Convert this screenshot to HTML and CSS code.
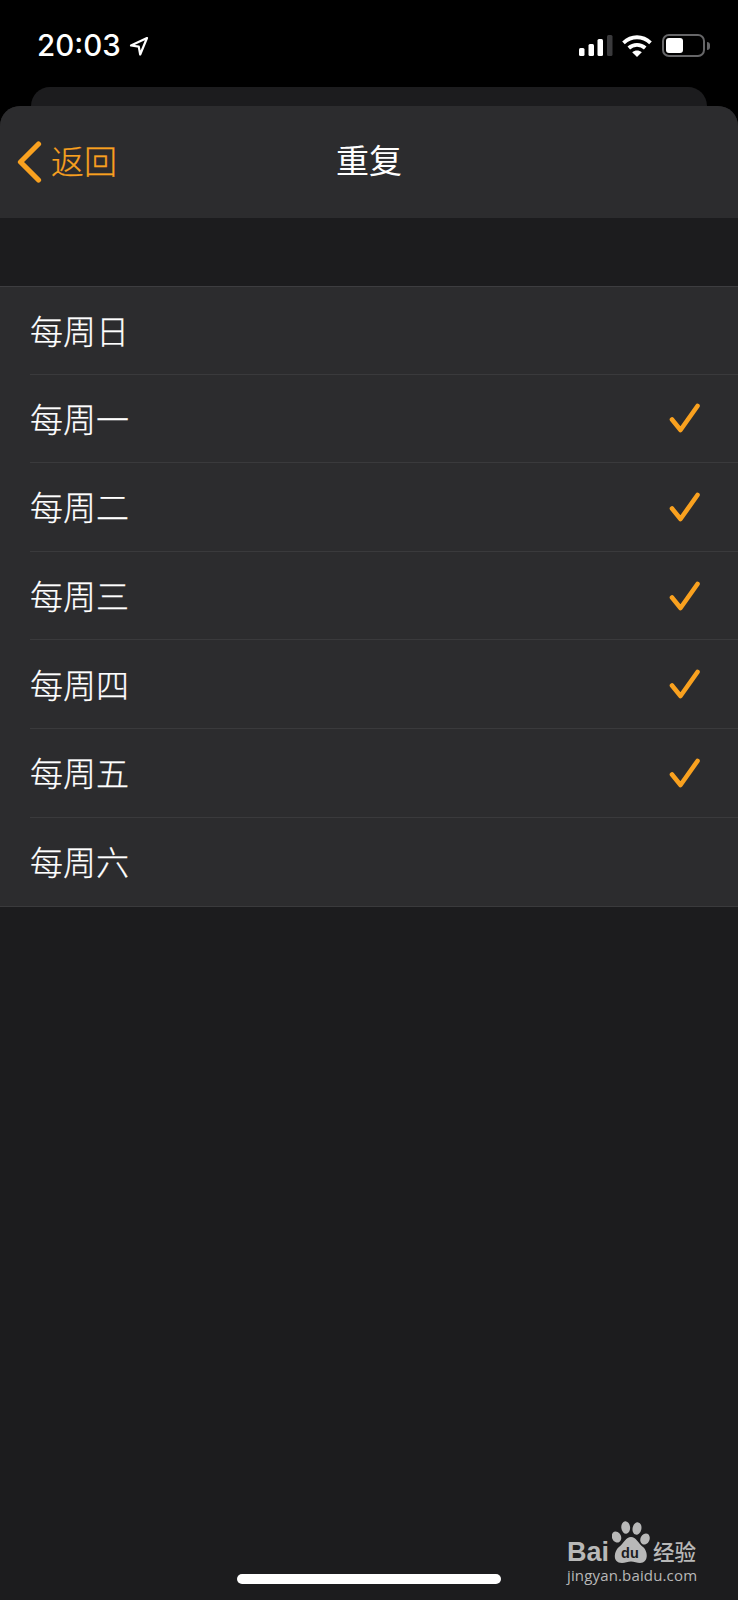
FILE: index.html
```html
<!DOCTYPE html>
<html lang="zh">
<head>
<meta charset="utf-8">
<title>重复</title>
<link rel="stylesheet" href="styles.css">
</head>
<body>
<div class="phone">
  <header class="status">
    <div class="status-left">
      <span class="time">20:03</span>
      <svg class="loc" width="20" height="20" viewBox="0 0 20 20"><path d="M18 2 2 9.500l7.800 1.200 1.400 7.800z" fill="none" stroke="#fff" stroke-width="2.200" stroke-linejoin="round"/></svg>
    </div>
    <div class="status-right">
      <svg class="signal" width="34" height="21" viewBox="0 0 34 21">
        <rect x="0" y="13" width="5.500" height="8" rx="1.500" fill="#fff"/>
        <rect x="9.500" y="9" width="5.500" height="12" rx="1.500" fill="#fff"/>
        <rect x="18.500" y="4" width="5.500" height="17" rx="1.500" fill="#fff"/>
        <rect x="28" y="0" width="5.500" height="21" rx="1.500" fill="#3a3a3c"/>
      </svg>
      <svg class="wifi" width="30" height="22" viewBox="0 0 30 22" fill="none" stroke="#fff" stroke-width="3.800">
        <path d="M1.500 7.800C9.400 .4 20.600 .4 28.500 7.800"/>
        <path d="M6.800 13C11.400 8.800 18.600 8.800 23.200 13"/>
        <path d="M15 22 10.200 17.200C13 14.800 17 14.800 19.800 17.200z" fill="#fff" stroke="none"/>
      </svg>
      <div class="battery">
        <div class="battery-body"><div class="battery-level"></div></div>
        <div class="battery-cap"></div>
      </div>
    </div>
  </header>
  <div class="back-sheet"></div>
  <main class="sheet">
    <nav class="nav">
      <div class="nav-back">
        <svg width="26" height="44" viewBox="0 0 26 44" fill="none" stroke="#f9a11f" stroke-width="5.200" stroke-linecap="round" stroke-linejoin="round"><path d="M21.500 4 3.500 22l18 18"/></svg>
        <span class="nav-back-label">返回</span>
      </div>
      <h1 class="nav-title">重复</h1>
    </nav>
    <div class="spacer"></div>
    <ul class="list">
      <li class="row"><div class="row-inner"><span class="row-label">每周日</span></div></li>
      <li class="row"><div class="row-inner"><span class="row-label">每周一</span><svg class="check" width="32" height="34" viewBox="0 0 32 34"><path d="M3 18.500 11.500 29 28.500 5"/></svg></div></li>
      <li class="row"><div class="row-inner"><span class="row-label">每周二</span><svg class="check" width="32" height="34" viewBox="0 0 32 34"><path d="M3 18.500 11.500 29 28.500 5"/></svg></div></li>
      <li class="row"><div class="row-inner"><span class="row-label">每周三</span><svg class="check" width="32" height="34" viewBox="0 0 32 34"><path d="M3 18.500 11.500 29 28.500 5"/></svg></div></li>
      <li class="row"><div class="row-inner"><span class="row-label">每周四</span><svg class="check" width="32" height="34" viewBox="0 0 32 34"><path d="M3 18.500 11.500 29 28.500 5"/></svg></div></li>
      <li class="row"><div class="row-inner"><span class="row-label">每周五</span><svg class="check" width="32" height="34" viewBox="0 0 32 34"><path d="M3 18.500 11.500 29 28.500 5"/></svg></div></li>
      <li class="row"><div class="row-inner"><span class="row-label">每周六</span></div></li>
    </ul>
    <div class="home-indicator"></div>
  </main>
  <div class="watermark">
    <div class="wm-top">
      <span class="wm-bai">Bai</span>
      <div class="wm-logo">
        <svg width="38" height="42" viewBox="0 0 38 42" fill="#b8b8b8">
          <ellipse cx="4.500" cy="16" rx="4.500" ry="5.800" transform="rotate(-25 4.500 16)"/>
          <ellipse cx="13.700" cy="6.500" rx="4.400" ry="6.200" transform="rotate(-6 13.700 6.500)"/>
          <ellipse cx="25" cy="7.500" rx="4.400" ry="6.200" transform="rotate(12 25 7.500)"/>
          <ellipse cx="33" cy="18" rx="4.500" ry="5.800" transform="rotate(25 33 18)"/>
          <path d="M19 16C14 16 12 22 7 26 2 30 0 42 10 42 13 42 16 40.500 19 40.500S25 42 28 42C37 42 36 30 31 26 26 22 24 16 19 16z"/>
        </svg>
        <span class="wm-du">du</span>
      </div>
      <span class="wm-cn">经验</span>
    </div>
    <div class="wm-url">jingyan.baidu.com</div>
  </div>
</div>
</body>
</html>
```

FILE: styles.css
```css
* { box-sizing: border-box; }
html, body { margin: 0; padding: 0; background: #000; }
body { font-family: "Noto Sans CJK SC", "Noto Sans", sans-serif; color: #fff; }
.phone { position: relative; width: 738px; height: 1600px; display: flex; flex-direction: column; overflow: hidden; background: #000; }

.status { height: 87px; flex: none; display: flex; justify-content: space-between; padding: 29px 28px 0 37px; align-items: flex-start; }
.status-left { display: flex; align-items: center; gap: 8px; }
.time { font-family: Inter, "Liberation Sans", sans-serif; font-size: 29.500px; font-weight: 500; line-height: 33px; }
.status-right { display: flex; align-items: center; margin-top: 5px; }
.signal { margin-right: 9px; }
.wifi { margin-right: 10px; }
.battery { display: flex; align-items: center; }
.battery-body { width: 43px; height: 23px; border: 2px solid #666668; border-radius: 7px; padding: 2px; }
.battery-level { width: 17px; height: 100%; background: #fff; border-radius: 3px; }
.battery-cap { width: 3px; height: 8px; margin-left: 2px; background: #666668; border-radius: 0 3px 3px 0; }

.back-sheet { height: 19px; flex: none; margin: 0 31px; background: #1c1c1e; border-radius: 20px 20px 0 0; }
.sheet { flex: 1; display: flex; flex-direction: column; background: #1c1c1e; border-radius: 20px 20px 0 0; overflow: hidden; }

.nav { height: 112px; flex: none; display: flex; align-items: center; position: relative; background: #2c2c2e; padding-left: 17px; }
.nav-back { display: flex; align-items: center; gap: 8px; color: #f9a11f; font-size: 33px; line-height: 44px; }
.nav-back-label { font-weight: 300; padding-bottom: 4px; -webkit-text-stroke: .25px #f9a11f; }
.nav-title { position: absolute; left: 0; right: 0; top: 0; bottom: 0; margin: 0; display: flex; align-items: center; justify-content: center; font-size: 33px; font-weight: 400; padding-bottom: 6px; }

.spacer { height: 68px; flex: none; }
.list { list-style: none; margin: 0; padding: 0; background: #2c2c2e; border-top: 1px solid #3d3d40; border-bottom: 1px solid #3a3a3c; }
.row { height: 88.600px; padding-left: 30px; }
.row:first-child { height: 87.600px; }
.row-inner { height: 100%; display: flex; align-items: center; justify-content: space-between; padding-right: 37px; font-size: 33px; line-height: 44px; border-bottom: 1px solid #3a3a3c; }
.row-label { font-weight: 300; padding-bottom: 1px; -webkit-text-stroke: .25px #fff; }
.row:last-child .row-inner { border-bottom: 0; }
.check { fill: none; stroke: #f9a11f; stroke-width: 4.600; stroke-linecap: round; stroke-linejoin: round; }

.home-indicator { width: 264px; height: 10px; flex: none; margin: auto auto 16px; background: #fff; border-radius: 5px; }

.watermark { position: absolute; left: 567px; top: 1521px; width: 135px; color: #b8b8b8; }
.wm-top { display: flex; align-items: flex-end; height: 42px; }
.wm-bai { font-family: "Liberation Sans", sans-serif; font-weight: 700; font-size: 27px; line-height: 27px; margin-bottom: -3px; }
.wm-logo { position: relative; width: 38px; height: 42px; margin-left: 3px; }
.wm-du { position: absolute; left: 9px; top: 25px; font-family: "Liberation Sans", sans-serif; font-weight: 700; font-size: 14.500px; line-height: 14px; color: #1c1c1e; }
.wm-cn { margin-left: 3px; font-size: 21.500px; line-height: 26px; font-weight: 500; margin-bottom: -1px; }
.wm-url { font-family: "Open Sans", sans-serif; font-size: 15px; line-height: 20px; letter-spacing: .15px; white-space: nowrap; margin-top: 2px; }
```
